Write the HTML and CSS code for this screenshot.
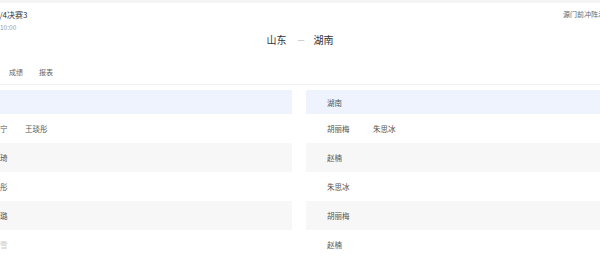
FILE: index.html
```html
<!DOCTYPE html>
<html>
<head>
    <meta charset="utf-8">
    <title>1/4决赛3</title>
    <link rel="stylesheet" href="styles.css">
</head>
<body>
    <div class="page">
        <div class="top-strip"></div>
        <div class="match-head">
            <div class="match-info">
                <div class="match-title">1/4决赛3</div>
                <div class="match-time">10:00</div>
            </div>
            <div class="match-teams">
                <span>山东</span><span class="vs">—</span><span>湖南</span>
            </div>
            <div class="match-extra">源门前冲阵示</div>
        </div>
        <div class="tabs">
            <span class="tab">对阵</span>
            <span class="tab">成绩</span>
            <span class="tab">报表</span>
        </div>
        <div class="board">
            <div class="side side-left">
                <div class="row row-team"><span class="cell">山东</span></div>
                <div class="row"><span class="cell">陈文宁</span><span class="cell">王琰彤</span></div>
                <div class="row row-gray"><span class="cell">孙雅琦</span></div>
                <div class="row"><span class="cell">刘晓彤</span></div>
                <div class="row row-gray"><span class="cell">钱一璐</span></div>
                <div class="row"><span class="cell cell-light">方小雪</span></div>
            </div>
            <div class="side">
                <div class="row row-team"><span class="cell">湖南</span></div>
                <div class="row"><span class="cell">胡丽梅</span><span class="cell">朱思冰</span></div>
                <div class="row row-gray"><span class="cell">赵楠</span></div>
                <div class="row"><span class="cell">朱思冰</span></div>
                <div class="row row-gray"><span class="cell">胡丽梅</span></div>
                <div class="row"><span class="cell">赵楠</span></div>
            </div>
        </div>
    </div>
</body>
</html>
```

FILE: styles.css
```css
html, body {
 margin: 0;
 padding: 0;
 overflow: hidden;
 background: #fff; }
body {
 font-family: "Noto Sans CJK SC", "Noto Sans", sans-serif;
 color: #333; }
.page {
 width: 684px;
 margin-left: -42px; }
.top-strip {
 height: 3px;
 background: #f4f4f4; }

.match-head {
 display: grid;
 grid-template-columns: 1fr auto 1fr;
 align-items: start;
 padding: 6px 37px 0 37px; }
.match-title {
 font-size: 8px;
 line-height: 12px;
 color: #333; }
.match-time {
 margin-top: 2px;
 padding-left: 5px;
 font-size: 6.5px;
 line-height: 8px;
 color: #999; }
.match-teams {
 padding-top: 25px;
 font-size: 10px;
 line-height: 12px;
 color: #333;
 display: flex;
 align-items: center; }
.match-teams .vs {
 font-size: 8px;
 color: #aaa;
 margin: 0 9px 0 11px; }
.match-extra {
 justify-self: end;
 font-size: 7px;
 line-height: 10px;
 color: #666; }

.tabs {
 display: flex;
 gap: 16px;
 padding: 20px 0 6px 21px;
 border-bottom: 1px solid #eef2f3;
 font-size: 7px;
 line-height: 12px;
 color: #666; }

.board {
 display: grid;
 grid-template-columns: 334px 336px;
 gap: 14px;
 margin-top: 5px; }
.row {
 display: flex;
 align-items: center;
 height: 29px;
 padding-left: 21px;
 font-size: 7.5px;
 color: #555; }
.row-team {
 height: 24px;
 background: #eef3fd; }
.row-gray {
 background: #f7f7f7; }
.cell {
 width: 46px;
 white-space: nowrap; }
.side-left .row {
 padding-left: 27px; }
.side-left .cell {
 width: 40px; }
.cell-light {
 color: #ccc; }
```
